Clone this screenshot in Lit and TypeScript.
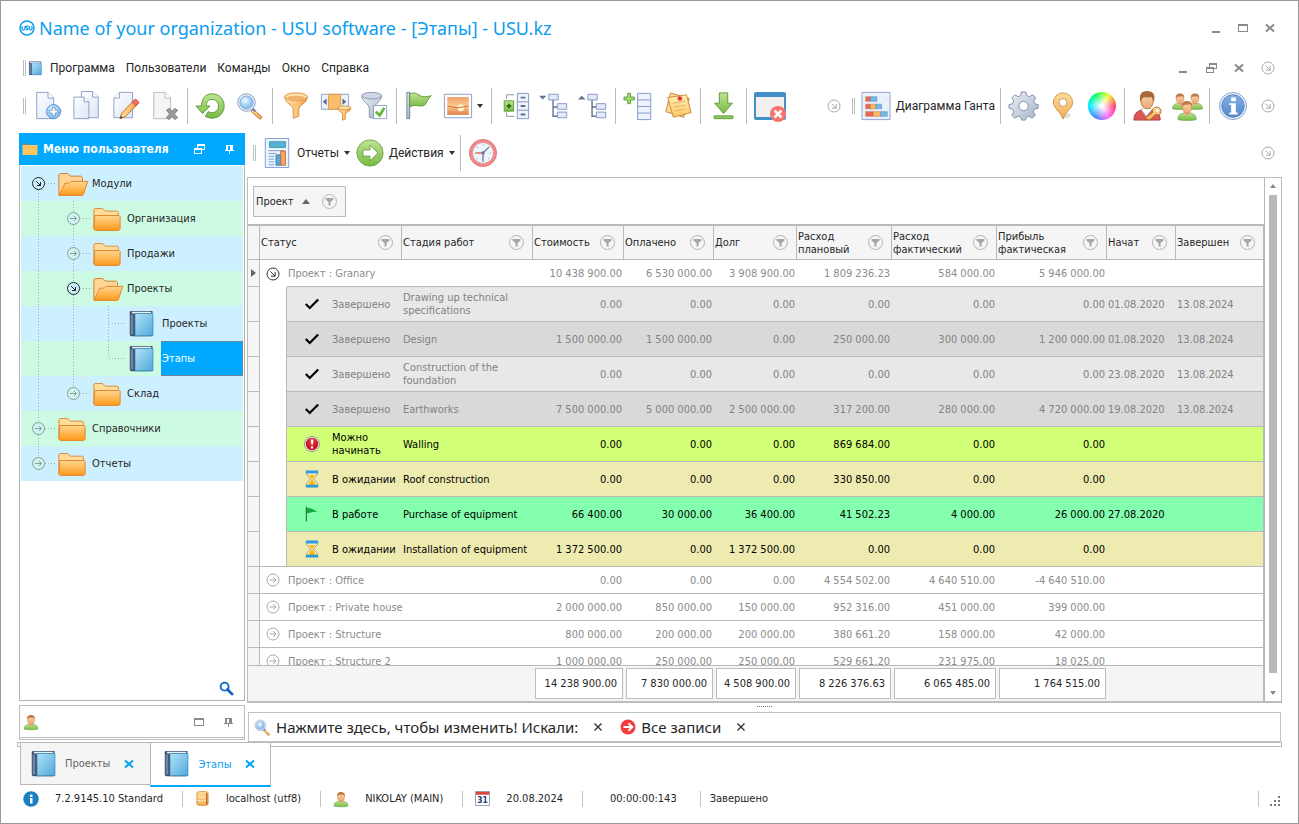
import { LitElement, html, svg, css, nothing } from "lit";
import { customElement, state } from "lit/decorators.js";
import { classMap } from "lit/directives/class-map.js";

type Art = ReturnType<typeof svg>;

const page = svg`<path d="M4 1.500h12l6 6v22H4z" fill="url(#paper)" stroke="#8c9cc4"/><path d="M16 1.500v6h6" fill="#fff" stroke="#8c9cc4"/>`;

const person = svg`<path d="M-1 29c0-6 3-8 9-10h10c6 2 9 4 9 10 0 2-28 2-28 0z" fill="url(#green)" stroke="#6aa843"/><path d="M9 17h8v3l-4 4-4-4z" fill="#eda873"/><ellipse cx="13" cy="11" rx="7" ry="8.500" fill="url(#skin)" stroke="#c98a5c"/><path d="M5.500 10C4 4 8 1 13 1s9 3 7.500 9c-1-2-1-3-3-4-3 1-7 0-9 1-2 0-2 2-3 3z" fill="#c07a45"/>`;

const art: Record<string, Art> = {
  logo: svg`<circle cx="16" cy="16" r="14" fill="none" stroke="#0a9df0" stroke-width="3"/><path d="M6 12v5c0 4 6 4 6 0v-5M19 12c-5-1-6 3-3 4s3 4-2 3M21 12v5c0 4 5 4 5 0v-5" fill="none" stroke="#0a9df0" stroke-width="2.500"/>`,
  book: svg`<path d="M2 2.500C2 1 3 1 4 1h24v27c0 1-1 2-2 2H4c-1 0-2-1-2-2z" fill="#3c4f70"/><path d="M4 2h22l1 2H5z" fill="#e9f1f8"/><path d="M8 4h20.500v25.500H8z" fill="url(#blue)" stroke="#2f86b8" stroke-width=".8"/><path d="M3 5h3v23H3z" fill="#7484a4"/>`,
  add: svg`${page}<circle cx="22" cy="22" r="7.500" fill="url(#sky)" stroke="#4f8cc6"/><path d="M20.500 17.500h3v3h3v3h-3v3h-3v-3h-3v-3h3z" fill="#fff" stroke="#4a8ac6" stroke-width=".8"/>`,
  copy: svg`<g transform="translate(6 -1)">${page}</g><path d="M2 6.500h11l5 5v18H2z" fill="url(#paper)" stroke="#8c9cc4"/><path d="M13 6.500v5h5" fill="#fff" stroke="#8c9cc4"/>`,
  edit: svg`<path d="M3 7.500l6-6h14v27H3z" fill="url(#paper)" stroke="#8c9cc4"/><path d="M9 1.500v6H3" fill="#fff" stroke="#8c9cc4"/><path d="M9.500 29.500l2-6L25 9.500l4 4L15 27.500z" fill="url(#orange)" stroke="#c06b22"/><path d="M22.500 12l3-3c1-1 5 3 4 4l-3 3z" fill="#f0705c" stroke="#c8503f"/><path d="M9.500 29.500l1-3 2 2z" fill="#444"/>`,
  remove: svg`<path d="M4 1.500h12l6 6v22H4z" fill="#f5f5f5" stroke="#b9b9b9"/><path d="M16 1.500v6h6" fill="#fff" stroke="#b9b9b9"/><path d="M17.500 20.500l3-2 3 3 3-3 3 2-3.500 4 3.500 4-3 2-3-3-3 3-3-2 3.500-4z" fill="#9a9a9a" stroke="#808080"/>`,
  refresh: svg`<path d="M6 16C6 8 10 3 17 3c8 0 13 6 13 13s-5 13-13 13c-3 0-5-1-7-2l3-5c5 3 11 0 11-6 0-4-3-7-7-7s-6 3-6 7h4L7 24 0 16z" fill="url(#green)" stroke="#5a9a32"/>`,
  search: svg`<path d="M20 20l9 8c1 2-1 4-3 2l-9-8z" fill="url(#orange)" stroke="#b8682a"/><path d="M17 17l5 5" stroke="#7f8fb3" stroke-width="3"/><circle cx="12" cy="12" r="10" fill="#eef3fb" stroke="#7f93c5"/><circle cx="12" cy="12" r="7.500" fill="url(#sky)" stroke="#7da0d8"/>`,
  funnel: svg`<path d="M4 6c0 8 9 8 9 14v9l6-2v-7c0-6 9-6 9-14z" fill="url(#orange)" stroke="#d3934a"/><ellipse cx="16" cy="6" rx="12" ry="4" fill="#ffe0a8" stroke="#d3934a"/><ellipse cx="16" cy="7" rx="9" ry="2" fill="#efb068"/>`,
  filterColumn: svg`<path d="M1.500 3.500h29v16h-29z" fill="#eef3fb" stroke="#8c9cc4"/><path d="M9 3.500h13v16H9z" fill="#fbbc6c" stroke="#e09a4a"/><path d="M7 8v7l-4-3.500zM24 8v7l4-3.500z" fill="#56688f"/><path d="M19 18c0 4 5 4 5 7v6l3-1v-5c0-3 6-3 6-7z" fill="url(#orange)" stroke="#d3934a"/><ellipse cx="26" cy="18" rx="7" ry="2" fill="#ffe0a8" stroke="#d3934a"/>`,
  filterCheck: svg`<path d="M3 5c0 7 8 8 8 14v9l5 1v-10c0-6 8-7 8-14z" fill="url(#steel)" stroke="#8793aa"/><ellipse cx="13.500" cy="5" rx="10.500" ry="3.500" fill="#d0d7e4" stroke="#8793aa"/><path d="M15.500 15.500h14v14h-14z" fill="#fff" stroke="#8c9cc4"/><path d="M18 22l4 4 5-8" fill="none" stroke="#5fb336" stroke-width="3"/>`,
  flag: svg`<path d="M2 1.500h3v28H2z" fill="url(#steel)" stroke="#68788f"/><path d="M5 3c5-2 8 0 11 2s8 1 12 0c-4 3-4 7-7 10-5 3-9-2-16 2z" fill="url(#green)" stroke="#5a9a32"/>`,
  picture: svg`<path d="M1.500 3.500h29v25h-29z" fill="#fff" stroke="#8899c8"/><path d="M4.500 6.500h23v19h-23z" fill="url(#sunset)"/><circle cx="19" cy="18" r="3.500" fill="#fff5c8"/><path d="M5 16l10 2 12-2" fill="none" stroke="#c9683a"/>`,
  groupAdd: svg`<path d="M18.500 2.500h12v27h-12zM18.500 11.500h12M18.500 20.500h12" fill="#eef3fb" stroke="#8296c8"/><path d="M22 7h5M22 16h5M22 25h5" stroke="#5d6f9a" stroke-width="2"/><path d="M7 8V4h8M7 23v4h8" fill="none" stroke="#7f8fa0"/><path d="M4.500 10.500h10v11h-10z" fill="url(#green)" stroke="#5a9a32"/><path d="M7 16h5M9.500 13.500v5" stroke="#2d6c22" stroke-width="2"/>`,
  collapse: svg`<path d="M0 5h8l-4 4z" fill="#66748c"/><path d="M15 9v18h5M15 17h5" fill="none" stroke="#62728f" stroke-width="1.500"/><path d="M10.500 3.500h10v6h-10zM19.500 13.500h10v6h-10zM19.500 22.500h10v6h-10z" fill="#e3ebf8" stroke="#8296c8"/>`,
  expand: svg`<path d="M0 9h8L4 5z" fill="#66748c"/><path d="M15 9v18h5M15 17h5" fill="none" stroke="#62728f" stroke-width="1.500"/><path d="M10.500 3.500h10v6h-10zM19.500 13.500h10v6h-10zM19.500 22.500h10v6h-10z" fill="#e3ebf8" stroke="#8296c8"/>`,
  addRows: svg`<path d="M14.500 2.500h14v28h-14zM14.500 9.500h14M14.500 16.500h14M14.500 23.500h14" fill="#eef3fb" stroke="#8296c8"/><path d="M4 2.500h3v4h4v3H7v4H4v-4H0v-3h4z" fill="#a5dc7c" stroke="#5a9a32"/>`,
  notes: svg`<path d="M8 2l20 6-6 20-19-6z" fill="#ffdd8a" stroke="#c9853e"/><path d="M5 7l20-3 5 19-19 5z" fill="url(#note)" stroke="#c9853e"/><path d="M11 13l12-2M12 17l12-2M13 21l9-1.500" stroke="#dcae68"/><circle cx="18" cy="8" r="2.500" fill="#e23c3c"/>`,
  download: svg`<path d="M11 2h9v11h5L15.500 24 6 13h5z" fill="url(#green)" stroke="#5a9a32"/><path d="M5.500 26.500h20v3h-20z" fill="#8fce5e" stroke="#5a9a32"/>`,
  closeWindow: svg`<path d="M2 2h28a2 2 0 0 1 2 2v24a2 2 0 0 1-2 2H2a2 2 0 0 1-2-2V4a2 2 0 0 1 2-2z" fill="#4290c8"/><path d="M2 7h28v20H2z" fill="#f1f1f1"/><circle cx="24" cy="24" r="8" fill="#f8736a"/><path d="M20.500 20.500l7 7m0-7l-7 7" stroke="#fff" stroke-width="2.500"/>`,
  gantt: svg`<path d="M1 1.500h30v29H1z" fill="#eaf1fb" stroke="#8fa0d0"/><g stroke="#c0603e" stroke-width=".5"><path d="M5 6h5v5H5zM5 14h5v5H5zM5 22h8v5H5z" fill="#ef6652"/><path d="M10 14h6v5h-6zM13 22h8v5h-8z" fill="#fbb95f"/><path d="M10 6h7v5h-7zM16 14h6v5h-6zM21 22h7v5h-7z" fill="#74b8ea" stroke="#4a82b6"/></g>`,
  gear: svg`<path d="M13.500 1h5l1 4 3 1.300 3.600-2.200 3.300 3.400-2.200 3.500L28.500 14l3.500 1v4l-4 1-1.300 3 2.200 3.600-3.400 3.300-3.500-2.200-3 1.300-1 3h-4l-1-3-3-1.300-3.600 2.200-3.300-3.300 2.200-3.600-1.300-3L0 19v-4l4-1 1.300-3L3.100 7.500l3.400-3.400L10 6.300 13 5z" transform="scale(.97)" fill="url(#steel)" stroke="#7c8ca6"/><circle cx="15.500" cy="16" r="5" fill="#fff" stroke="#7c8ca6"/>`,
  pin: svg`<ellipse cx="19" cy="27" rx="6" ry="3" fill="#00000022"/><path d="M16 31C14 23 5 19 5 12a11 11 0 0 1 22 0c0 7-9 11-11 19z" fill="url(#gold)" stroke="#c98a3e"/><circle cx="16" cy="12" r="4.500" fill="#fff" stroke="#b9965e"/>`,
  man: svg`<path d="M1 31c0-7 3-9 8-11h12c5 2 8 5 8 11z" fill="#dc5654" stroke="#a84340"/><path d="M9 20l5 7 6-7-2-2h-7z" fill="#fff" stroke="#b9b9c8"/><ellipse cx="15" cy="11" rx="6.500" ry="8" fill="url(#skin)" stroke="#b87a4c"/><path d="M8 12C6 4 9 0 15 0s10 4 7 12c-1-3-1-5-3-6-3 2-6 0-8 1-2 1-2 3-3 5z" fill="#a9683a"/><path d="M21 23c-2-5 5-8 8-4s-1 8-5 6l-6 6-4-1v-2z" fill="url(#gold)" stroke="#a66c27"/><circle cx="26" cy="21" r="1.500" fill="#fff"/>`,
  users: svg`<g transform="translate(1 2) scale(.58)">${person}</g><g transform="translate(17 2) scale(.58)">${person}</g><g transform="translate(7 10) scale(.7)">${person}</g>`,
  user: svg`<g transform="translate(3 1)">${person}</g>`,
  info: svg`<circle cx="16" cy="16" r="14.500" fill="#e6eef9" stroke="#8aa5cd"/><circle cx="16" cy="16" r="12" fill="url(#infoBlue)" stroke="#5b84bd"/><path d="M14 7h5v4h-5zM12 13h7v10h2v2h-9v-2h2v-8h-2z" fill="#fff"/>`,
  infoFlat: svg`<circle cx="16" cy="16" r="15.500" fill="#1a7fc0"/><path d="M14 7h5v5h-5zM14 14h5v11h-5z" fill="#fff"/>`,
  report: svg`<path d="M3.500.5h25v31h-25z" fill="#eaf4fd" stroke="#7f9ad8"/><path d="M8 4h17v6H8z" fill="#55b4d6" stroke="#3c91b3"/><path d="M7 13.500h17M7 16.500h8M7 19.500h6M7 22.500h6M7 25.500h6M7 28.500h6" stroke="#8296c8"/><path d="M15 18h5v11h-5z" fill="#55a9d8" stroke="#367fb0"/><path d="M20 14h5v15h-5z" fill="#f8a66a" stroke="#c86c38"/>`,
  go: svg`<circle cx="16" cy="16" r="15" fill="url(#green)" stroke="#6aa243"/><path d="M8 12.500h8V7l9 9-9 9v-5.500H8z" fill="#fff" stroke="#6a9d4a"/>`,
  clock: svg`<circle cx="16" cy="16" r="14" fill="#eef5fc" stroke="#f08a8a" stroke-width="3.500"/><circle cx="16" cy="16" r="15.500" fill="none" stroke="#d96a6c" stroke-width=".7"/><circle cx="16" cy="16" r="12" fill="none" stroke="#d96a6c" stroke-width=".7"/><path d="M16 16v10M16 16l7-7" stroke="#667a9a" stroke-width="1.500"/><path d="M16 16H7" stroke="#e05a55" stroke-width="1.500"/><path d="M16 6v1M25 16h-1M9 9l1 1M9 23l1-1M23 23l-1-1" stroke="#7788a0"/><circle cx="16" cy="16" r="2" fill="#67788f"/>`,
  folder: svg`<path d="M1 27V5l1-1h9l3 3h14l1 1v19z" fill="#ffdc9a" stroke="#d8842f"/><path d="M2 12h28l1 1v14c0 1-1 2-2 2H3c-1 0-2-1-2-2z" fill="url(#folder)" stroke="#e07d1e"/>`,
  folderOpen: svg`<path d="M1 28V5l2-1h8l3 3h12c1 0 2 1 2 2v6L6 28z" fill="#ffd494" stroke="#c9761f"/><path d="M8 15h5l2-2h19l-5 15c0 1-1 1-2 1H1z" fill="url(#folder)" stroke="#e07d1e"/>`,
  folderFlat: svg`<path d="M1 5h11l3 3H1z" fill="#8b8378"/><path d="M1 8h30v20H1z" fill="#fdc661"/>`,
  lens: svg`<circle cx="12" cy="12" r="8.500" fill="none" stroke="#0b63c6" stroke-width="4"/><path d="M18 18l10 10" stroke="#0b63c6" stroke-width="6" stroke-linecap="round"/>`,
  check: svg`<path d="M5 16l7 7L27 8" fill="none" stroke="#000" stroke-width="4"/>`,
  alert: svg`<circle cx="16" cy="16" r="13.500" fill="#e8e8e8" stroke="#8f8f8f" stroke-width="1.500"/><circle cx="16" cy="16" r="11" fill="url(#red)"/><path d="M14 8h4.500l-1 9h-2.500zM14 20h4v4h-4z" fill="#fff"/>`,
  hourglass: svg`<path d="M6 4h20c0 7-6 8-7 12 1 4 7 5 7 12H6c0-7 6-8 7-12-1-4-7-5-7-12z" fill="#f6f3c8" stroke="#a58f52" stroke-width="1.500"/><path d="M10 9h12l-6 7zM16 15l7 12H9z" fill="#f9b514"/><path d="M5 1h22v5H5zM5 26h22v5H5z" fill="#2b9ade"/>`,
  workFlag: svg`<path d="M5 3h2v26H5z" fill="#2b6f3c"/><path d="M7 5c7 0 13 4 19 7-7 0-12 1-19 3z" fill="#13a83e"/>`,
  goRed: svg`<circle cx="16" cy="16" r="15" fill="#f53b3b"/><path d="M7 16h17M17 8.500l7.500 7.500-7.500 7.500" fill="none" stroke="#fff" stroke-width="4"/>`,
  database: svg`<path d="M4 4c0-4 24-4 24 0v24c0 4-24 4-24 0z" fill="url(#gold)" stroke="#c5802e" stroke-width="1.500"/><path d="M5 11c0 3 22 3 22 0M5 19c0 3 22 3 22 0" fill="none" stroke="#fff2d8" stroke-width="2"/><path d="M25 4v25" stroke="#b9651d" stroke-width="3"/>`,
};

const icon = (name: string, size: number) =>
  html`<svg class="icon" viewBox="0 0 32 32" width=${size} height=${size} aria-hidden="true">${art[name]}</svg>`;

const glyphs: Record<string, Art> = {
  min: svg`<path d="M4 11h8v2H4z"/>`,
  max: svg`<path fill-rule="evenodd" d="M3 4h10v8H3zM4 6v5h8V6z"/>`,
  restore: svg`<path fill-rule="evenodd" d="M6 3h8v6h-3v4H3V7h3zm1 2v2h4v1h2V5zM4 9v3h6V9z"/>`,
  close: svg`<path d="M4 4.500l8 7M12 4.500l-8 7" fill="none" stroke="currentColor" stroke-width="2"/>`,
  cross: svg`<path d="M4.500 4.500l7 7M11.500 4.500l-7 7" fill="none" stroke="currentColor" stroke-width="1.400"/>`,
  pin: svg`<path fill-rule="evenodd" d="M5 4h7v5h1v1H9v3H8v-3H4V9h1zm2 1v4h2V5z"/>`,
};
const glyph = (name: string) =>
  html`<svg class="glyph" viewBox="0 0 16 16" width="16" height="16" aria-hidden="true">${glyphs[name]}</svg>`;

const arrowSouthEast = html`<svg class="ring" viewBox="0 0 14 14" width="14" height="14" aria-hidden="true"><circle cx="7" cy="7" r="6"/><path d="M4.500 4.500L9 9M9.200 5v4.200H5"/></svg>`;
const arrowEast = html`<svg class="ring" viewBox="0 0 14 14" width="14" height="14" aria-hidden="true"><circle cx="7" cy="7" r="6"/><path d="M3.500 7h6.500M7.300 4.200L10 7 7.300 9.800"/></svg>`;
const caret = html`<svg class="caret" viewBox="0 0 6 4" width="6" height="4" aria-hidden="true"><path d="M0 0h6L3 4z"/></svg>`;

interface Column { title: string; wide: boolean }
const columns: Column[] = [
  { title: "Статус", wide: true },
  { title: "Стадия работ", wide: false },
  { title: "Стоимость", wide: false },
  { title: "Оплачено", wide: false },
  { title: "Долг", wide: false },
  { title: "Расход плановый", wide: false },
  { title: "Расход фактический", wide: false },
  { title: "Прибыль фактическая", wide: false },
  { title: "Начат", wide: false },
  { title: "Завершен", wide: false },
];

interface Stage { kind: string; mark: string; status: string; name: string; sums: string[]; start: string; end: string }
const stages: Stage[] = [
  { kind: "done", mark: "check", status: "Завершено", name: "Drawing up technical specifications", sums: ["0.00", "0.00", "0.00", "0.00", "0.00", "0.00"], start: "01.08.2020", end: "13.08.2024" },
  { kind: "done alt", mark: "check", status: "Завершено", name: "Design", sums: ["1 500 000.00", "1 500 000.00", "0.00", "250 000.00", "300 000.00", "1 200 000.00"], start: "01.08.2020", end: "13.08.2024" },
  { kind: "done", mark: "check", status: "Завершено", name: "Construction of the foundation", sums: ["0.00", "0.00", "0.00", "0.00", "0.00", "0.00"], start: "23.08.2020", end: "13.08.2024" },
  { kind: "done alt", mark: "check", status: "Завершено", name: "Earthworks", sums: ["7 500 000.00", "5 000 000.00", "2 500 000.00", "317 200.00", "280 000.00", "4 720 000.00"], start: "19.08.2020", end: "13.08.2024" },
  { kind: "ready", mark: "alert", status: "Можно начинать", name: "Walling", sums: ["0.00", "0.00", "0.00", "869 684.00", "0.00", "0.00"], start: "", end: "" },
  { kind: "wait", mark: "hourglass", status: "В ожидании", name: "Roof construction", sums: ["0.00", "0.00", "0.00", "330 850.00", "0.00", "0.00"], start: "", end: "" },
  { kind: "work", mark: "workFlag", status: "В работе", name: "Purchase of equipment", sums: ["66 400.00", "30 000.00", "36 400.00", "41 502.23", "4 000.00", "26 000.00"], start: "27.08.2020", end: "" },
  { kind: "wait", mark: "hourglass", status: "В ожидании", name: "Installation of equipment", sums: ["1 372 500.00", "0.00", "1 372 500.00", "0.00", "0.00", "0.00"], start: "", end: "" },
];

interface Project { name: string; sums: string[]; stages: Stage[] }
const projects: Project[] = [
  { name: "Granary", sums: ["10 438 900.00", "6 530 000.00", "3 908 900.00", "1 809 236.23", "584 000.00", "5 946 000.00"], stages },
  { name: "Office", sums: ["0.00", "0.00", "0.00", "4 554 502.00", "4 640 510.00", "-4 640 510.00"], stages: [] },
  { name: "Private house", sums: ["2 000 000.00", "850 000.00", "150 000.00", "952 316.00", "451 000.00", "399 000.00"], stages: [] },
  { name: "Structure", sums: ["800 000.00", "200 000.00", "200 000.00", "380 661.20", "158 000.00", "42 000.00"], stages: [] },
  { name: "Structure 2", sums: ["1 000 000.00", "250 000.00", "250 000.00", "529 661.20", "231 975.00", "18 025.00"], stages: [] },
];
const totals = ["14 238 900.00", "7 830 000.00", "4 508 900.00", "8 226 376.63", "6 065 485.00", "1 764 515.00"];

// Guide letters: F full line, B line below, T line above, R branch to the right, O open node, C closed node.
interface TreeNode { guides: string[]; icon: string; label: string }
const tree: TreeNode[] = [
  { guides: ["BRO"], icon: "folderOpen", label: "Модули" },
  { guides: ["F", "FRC"], icon: "folder", label: "Организация" },
  { guides: ["F", "FRC"], icon: "folder", label: "Продажи" },
  { guides: ["F", "FRO"], icon: "folderOpen", label: "Проекты" },
  { guides: ["F", "F", "FR"], icon: "book", label: "Проекты" },
  { guides: ["F", "F", "TR"], icon: "book", label: "Этапы" },
  { guides: ["F", "TRC"], icon: "folder", label: "Склад" },
  { guides: ["FRC"], icon: "folder", label: "Справочники" },
  { guides: ["TRC"], icon: "folder", label: "Отчеты" },
];

@customElement("app-root")
export class AppRoot extends LitElement {
  @state() private selected = 5;

  static styles = css`
    :host {
      display: flex;
      flex-direction: column;
      box-sizing: border-box;
      height: 100vh;
      min-height: 600px;
      overflow: hidden;
      padding: 0 16px 13px 18px;
      border: 1px solid #999;
      background: #fff;
      color: #262626;
      font: 11px/13px "DejaVu Sans Condensed", "Noto Sans", sans-serif;
    }
    * { box-sizing: border-box; }
    button { font: inherit; color: inherit; background: none; border: 0; padding: 0; margin: 0; text-align: left; }
    a { color: inherit; text-decoration: none; }
    svg { display: block; flex: none; }
    .defs { width: 0; height: 0; position: absolute; }
    .icon { overflow: visible; }
    .glyph { fill: currentColor; color: #8a8a8a; }
    .ring { fill: none; stroke: #a9a9a9; stroke-width: 1; overflow: visible; }
    .caret { fill: #333; }

    .titlebar { display: flex; align-items: center; flex: none; height: 54px; }
    .titlebar h1 { margin: 0 auto 0 4px; font: 400 18px/24px "Noto Sans", "Open Sans", sans-serif; color: #0a9df0; white-space: nowrap; }
    .window-buttons { display: flex; gap: 11px; padding-right: 4px; }

    .menubar { display: flex; align-items: center; flex: none; height: 26px; font: 12px/16px Roboto, "Noto Sans", sans-serif; }
    .menubar nav { display: flex; gap: 11px; margin: 0 auto 0 7px; }
    .grip { flex: none; width: 3px; height: 16px; margin: 0 2px 0 4px; border: solid #bdbdbd; border-width: 0 1px; }
    .child-buttons { display: flex; gap: 12px; margin-right: 14px; }
    .more { flex: none; margin-right: 7px; }

    .toolbars { display: flex; align-items: center; flex: none; height: 52px; padding-bottom: 2px; }
    .toolbar { display: flex; align-items: center; }
    .toolbar.fill { flex: 1; }
    .toolbar.fill .more { margin-left: auto; }
    .toolbar.service .more { margin-left: 9px; }
    .tool { display: flex; align-items: center; justify-content: center; width: 39px; height: 36px; }
    .tool.drop { width: 49px; justify-content: flex-start; gap: 4px; padding-left: 4px; }
    .tool.text { width: auto; gap: 5px; padding: 0 2px 0 4px; font: 12px/16px Roboto, "Noto Sans", sans-serif; }
    .sep { flex: none; width: 1px; height: 36px; margin: 0 3px; background: #bcbcbc; }
    .wheel { width: 28px; height: 28px; border-radius: 50%; background: radial-gradient(circle, #fff 5%, #fff0 65%), conic-gradient(from 90deg, #ff3c6c, #f6f, #48f, #0ef, #0f6, #ef3, #ff3c6c); }

    .main { display: flex; flex: 1; min-height: 0; gap: 2px; }
    .sidebar { display: flex; flex-direction: column; flex: none; width: 226px; }
    .side-head { display: flex; align-items: center; flex: none; height: 32px; padding: 0 8px 0 3px; background: #00a8ff; color: #fff; }
    .side-head h2 { margin: 0 auto 0 5px; font: bold 12px/16px "DejaVu Sans Condensed", "Noto Sans", sans-serif; }
    .side-head .glyph { color: #fff; }
    .side-head button + button { margin-left: 14px; }
    .side-body { display: flex; flex-direction: column; flex: 1; padding: 0 1px; border: 1px solid #b4b4b4; border-top-color: #fff; }
    .tree { list-style: none; margin: 0; padding: 0; }
    .tree li { display: flex; height: 35px; background: #cdf0fe; }
    .tree li:nth-child(even) { background: #cdfae3; }
    .tree .node { display: flex; align-items: center; flex: none; width: 35px; padding-left: 2px; }
    .tree a { display: flex; align-items: center; flex: 1; padding: 0 1px; border: 1px dotted transparent; border-width: 1px 1px 1px 0; }
    .tree a.selected { background: #00a8ff; color: #fff; border-color: #d06a30; }
    .guide { stroke: #a9a9a9; fill: none; }
    .guide .dots { stroke-dasharray: 1 2; }
    .guide .open { stroke: #222; fill: #cdf0fe; }
    .guide .closed { stroke: #8e9a9a; fill: #cdf5f0; }
    .guide path.open, .guide path.closed { fill: none; }
    .side-search { margin: auto 9px 4px auto; }
    .side-foot { display: flex; align-items: center; flex: none; height: 33px; margin-top: 4px; padding: 0 8px 0 3px; border: 1px solid #bdbdbd; }
    .side-foot .icon { margin-right: auto; }
    .side-foot button + button { margin-left: 13px; }
    .side-line { flex: none; height: 2px; margin-bottom: 2px; border: solid #bdbdbd; border-width: 0 1px 1px; }

    .content { display: flex; flex-direction: column; flex: 1; min-width: 0; }
    .local { display: flex; align-items: center; flex: none; height: 39px; margin-bottom: 5px; padding-left: 2px; }
    .local .more { margin-left: auto; }
    .frame { display: flex; flex: 1; min-height: 0; border: 1px solid #bdbdbd; border-bottom-width: 2px; }
    .grid { display: flex; flex-direction: column; flex: 1; min-width: 0; }
    .group-panel { display: flex; flex: none; height: 46px; padding: 8px 5px; }
    .group-field { display: flex; align-items: center; width: 93px; height: 31px; padding: 0 8px 0 2px; border: 1px solid #b9b9b9; background: #f5f5f5; }
    .group-field svg:last-child { margin-left: auto; }
    .group-field .sort { margin-left: 8px; fill: #666; }
    .scroller { flex: 1; min-height: 0; overflow: hidden; border-top: 2px solid #b9b9b9; }
    table { width: 100%; table-layout: fixed; border-collapse: separate; border-spacing: 0; }
    .c-mark { width: 12px; }
    .c-indent { width: 27px; }
    .c-status { width: 115px; }
    .c-stage { width: 131px; }
    .c-cost { width: 91px; }
    .c-paid { width: 90px; }
    .c-debt { width: 83px; }
    .c-plan { width: 95px; }
    .c-fact { width: 105px; }
    .c-profit { width: 110px; }
    .c-start { width: 69px; }
    th, td { padding: 0 2px 0 1px; border: 0 solid #b9b9b9; border-bottom-width: 1px; text-align: left; font-weight: 400; vertical-align: middle; }
    th { height: 34px; border-right-width: 1px; background: #f5f5f5; color: #262626; }
    th div { display: flex; align-items: center; justify-content: space-between; padding: 0 6px 0 0; }
    .num { text-align: right; white-space: nowrap; }
    td:last-child { border-right-width: 1px; }
    td.indicator { padding: 0 3px; border-right-width: 1px; background: #f5f5f5; }
    .group td { height: 27px; color: #8b8b8b; }
    .group .node { padding: 0; }
    .group .node svg { margin: 0 6px; }
    .group.open .node { border-bottom-width: 0; }
    .group.open .ring { stroke: #333; }
    .stage td { height: 35px; color: #000; }
    .stage td.indent { border-right-width: 1px; border-bottom-width: 0; }
    .stage.last td.indent { border-bottom-width: 1px; }
    .stage .state { display: flex; align-items: center; gap: 11px; padding-left: 15px; }
    .stage.done td { color: #828282; }
    .done td:not(.indicator) { background-color: #e8e8e8; }
    .done.alt td:not(.indicator) { background-color: #d9d9d9; }
    .ready td:not(.indicator) { background-color: #d2ff78; }
    .wait td:not(.indicator) { background-color: #eeebb1; }
    .work td:not(.indicator) { background-color: #84ffae; }
    .stage td.indent:not(.indicator) { background: #fff; }
    .totals { flex: none; border-top: 1px solid #b9b9b9; background: #f5f5f5; height: 36px; }
    .totals td { height: 35px; padding: 0 1px 0 2px; border-width: 0; }
    .totals td:last-child { border-right-width: 1px; }
    .totals output { display: block; height: 31px; padding: 0 5px; border: 1px solid #bdbdbd; background: #fff; line-height: 29px; }
    .scrollbar { display: flex; flex-direction: column; align-items: center; flex: none; width: 17px; padding: 6px 0; border-left: 1px solid #b9b9b9; }
    .scrollbar .thumb { flex: 1; width: 8px; margin: 7px 0 18px; background: #b9b9b9; }
    .scrollbar svg { fill: #888; }

    .splitter { display: flex; justify-content: center; flex: none; height: 9px; padding-top: 3px; }
    .splitter span { width: 15px; height: 1px; background: repeating-linear-gradient(90deg, #777 0 1px, #fff 1px 2px); }
    .search-bar { display: flex; align-items: center; flex: none; height: 30px; margin: 0 1px; padding: 0 5px; border: 1px solid #c2c2c2; font: 15px/22px "Noto Sans", sans-serif; white-space: nowrap; }
    .search-bar .label { margin-left: 5px; }
    .search-bar .clear { margin: 0 14px 0 12px; }
    .search-bar .glyph { color: #333; }

    .tabs { display: flex; align-items: flex-start; flex: none; height: 45px; margin-left: -2px; border-top: 1px solid #b9b9b9; }
    .tabs::before { content: ""; width: 2px; height: 3px; border: solid #b9b9b9; border-width: 0 0 1px 1px; }
    .tabs::after { content: ""; flex: 1; height: 3px; border: solid #b9b9b9; border-width: 0 1px 1px 0; }
    .tab { display: flex; align-items: center; height: 42px; padding: 0 13px 0 9px; border: solid #b9b9b9; border-width: 0 0 1px 1px; background: #f5f5f5; color: #666; }
    .tab .name { margin: 0 11px 0 7px; }
    .tab .glyph { color: #00a2ec; }
    .tab.current { height: 44px; padding: 0 12px; border-width: 0 1px 2px; border-bottom-color: #00a8ff; background: #fff; color: #0a9df0; }

    .status { display: flex; align-items: center; flex: none; height: 23px; }
    .status .cell { display: flex; align-items: center; gap: 16px; height: 16px; padding: 0 19px 0 12px; border-right: 1px solid #c4c4c4; }
    .status .cell:first-child { padding-left: 4px; }
    .status .cell.time { padding: 0 23px 0 27px; }
    .status .cell.state-text { flex: 1; padding-left: 9px; }
    .resize { margin: 4px 1px 0 10px; fill: #777; }
  `;

  private tool(name: string, label: string, size = 30) {
    return html`<button class="tool" aria-label=${label}>${icon(name, size)}</button>`;
  }

  private filterMark() {
    return html`<svg viewBox="0 0 15 15" width="15" height="15" aria-hidden="true"><circle cx="7.500" cy="7.500" r="7" fill="none" stroke="#b4b4b4"/><path d="M3.500 4h8v1.500L8.500 8v3.500h-2V8l-3-2.500z" fill="#a6a6a6"/></svg>`;
  }

  private cols() {
    return html`<colgroup>${["mark", "indent", "status", "stage", "cost", "paid", "debt", "plan", "fact", "profit", "start", "end"].map(
      (c) => html`<col class="c-${c}">`
    )}</colgroup>`;
  }

  private guide(kind: string) {
    const has = (c: string) => kind.includes(c);
    const node = has("O") || has("C");
    return html`<svg class="guide" viewBox="0 0 35 35" width="35" height="35" aria-hidden="true">
      ${has("F") || has("T") ? svg`<path class="dots" d="M17.500 0v17"/>` : nothing}
      ${has("F") || has("B") ? svg`<path class="dots" d="M17.500 18v17"/>` : nothing}
      ${has("R") ? svg`<path class="dots" d="M18 17.500h17"/>` : nothing}
      ${node ? svg`<circle class=${has("O") ? "open" : "closed"} cx="17.500" cy="17.500" r="6"/>` : nothing}
      ${has("O") ? svg`<path class="open" d="M15 15l4.500 4.500V16v3.500H16"/>` : nothing}
      ${has("C") ? svg`<path class="closed" d="M14 17.500h6.500M18 15l2.500 2.500L18 20"/>` : nothing}
    </svg>`;
  }

  private projectRows(p: Project, index: number) {
    const open = p.stages.length > 0;
    return html`
      <tr class=${classMap({ group: true, open })}>
        <td class="indicator">${index === 0 ? html`<svg viewBox="0 0 5 8" width="5" height="8" aria-hidden="true"><path d="M0 0l5 4-5 4z" fill="#666"/></svg>` : nothing}</td>
        <td class="node">${open ? arrowSouthEast : arrowEast}</td>
        <td colspan="2">Проект : ${p.name}</td>
        ${p.sums.map((s) => html`<td class="num">${s}</td>`)}
        <td></td><td></td>
      </tr>
      ${p.stages.map((s, i) => html`
        <tr class="stage ${s.kind} ${i === p.stages.length - 1 ? "last" : ""}">
          <td class="indicator"></td>
          <td class="indent"></td>
          <td><div class="state">${icon(s.mark, 18)}<span>${s.status}</span></div></td>
          <td>${s.name}</td>
          ${s.sums.map((n) => html`<td class="num">${n}</td>`)}
          <td>${s.start}</td>
          <td>${s.end}</td>
        </tr>`)}`;
  }

  render() {
    return html`
      <svg class="defs" aria-hidden="true">
        <defs>
          <linearGradient id="paper" x2="1" y2="1"><stop stop-color="#fff"/><stop offset="1" stop-color="#dbe6f6"/></linearGradient>
          <linearGradient id="green" x2="0" y2="1"><stop stop-color="#bfe394"/><stop offset="1" stop-color="#78bb44"/></linearGradient>
          <linearGradient id="orange" x2="1" y2="0"><stop stop-color="#ffdba0"/><stop offset=".5" stop-color="#ffc678"/><stop offset="1" stop-color="#ee9a4a"/></linearGradient>
          <linearGradient id="gold" x2="0" y2="1"><stop stop-color="#ffdc98"/><stop offset="1" stop-color="#f5ad55"/></linearGradient>
          <linearGradient id="folder" x2="0" y2="1"><stop stop-color="#ffd690"/><stop offset="1" stop-color="#ff9a1c"/></linearGradient>
          <linearGradient id="blue" x2="1" y2="1"><stop stop-color="#b4e2f7"/><stop offset="1" stop-color="#4fa9da"/></linearGradient>
          <linearGradient id="steel" x2="1" y2="1"><stop stop-color="#eef2f8"/><stop offset="1" stop-color="#a6b2c6"/></linearGradient>
          <linearGradient id="sunset" x2="0" y2="1"><stop stop-color="#f0a06a"/><stop offset=".5" stop-color="#fbc98c"/><stop offset="1" stop-color="#e0804a"/></linearGradient>
          <linearGradient id="note" x2="0" y2="1"><stop stop-color="#fff0b4"/><stop offset="1" stop-color="#fbc765"/></linearGradient>
          <linearGradient id="skin" x2="0" y2="1"><stop stop-color="#fbd3ac"/><stop offset="1" stop-color="#eda873"/></linearGradient>
          <linearGradient id="infoBlue" x2="0" y2="1"><stop stop-color="#84b0e8"/><stop offset="1" stop-color="#5288cc"/></linearGradient>
          <radialGradient id="sky" cx=".4" cy=".35"><stop stop-color="#f2faff"/><stop offset="1" stop-color="#8fc4f0"/></radialGradient>
          <radialGradient id="red" cx=".5" cy=".3"><stop stop-color="#f24a4a"/><stop offset="1" stop-color="#c80f1c"/></radialGradient>
        </defs>
      </svg>

      <header class="titlebar">
        ${icon("logo", 16)}
        <h1>Name of your organization - USU software - [Этапы] - USU.kz</h1>
        <div class="window-buttons">
          <button aria-label="Свернуть">${glyph("min")}</button>
          <button aria-label="Развернуть">${glyph("max")}</button>
          <button aria-label="Закрыть">${glyph("close")}</button>
        </div>
      </header>

      <div class="menubar">
        <span class="grip"></span>
        ${icon("book", 15)}
        <nav>
          ${["Программа", "Пользователи", "Команды", "Окно", "Справка"].map((m) => html`<button>${m}</button>`)}
        </nav>
        <div class="child-buttons">
          <button aria-label="Свернуть окно">${glyph("min")}</button>
          <button aria-label="Восстановить окно">${glyph("restore")}</button>
          <button aria-label="Закрыть окно">${glyph("close")}</button>
        </div>
        <button class="more" aria-label="Настроить меню">${arrowSouthEast}</button>
      </div>

      <div class="toolbars">
        <div class="toolbar fill">
          <span class="grip"></span>
          ${this.tool("add", "Добавить")}${this.tool("copy", "Копировать")}${this.tool("edit", "Редактировать")}${this.tool("remove", "Удалить")}
          <span class="sep"></span>
          ${this.tool("refresh", "Обновить")}${this.tool("search", "Поиск", 28)}
          <span class="sep"></span>
          ${this.tool("funnel", "Фильтр")}${this.tool("filterColumn", "Фильтр по столбцу")}${this.tool("filterCheck", "Фильтр по значению")}
          <span class="sep"></span>
          ${this.tool("flag", "Статус")}
          <button class="tool drop" aria-label="Изображение">${icon("picture", 30)}${caret}</button>
          <span class="sep"></span>
          ${this.tool("groupAdd", "Группировка")}${this.tool("collapse", "Развернуть группы")}${this.tool("expand", "Свернуть группы")}
          <span class="sep"></span>
          ${this.tool("addRows", "Добавить строки")}${this.tool("notes", "Заметки")}
          <span class="sep"></span>
          ${this.tool("download", "Экспорт")}
          <span class="sep"></span>
          ${this.tool("closeWindow", "Закрыть окно", 32)}
          <button class="more" aria-label="Настроить панель">${arrowSouthEast}</button>
        </div>
        <div class="toolbar service">
          <span class="grip"></span>
          <button class="tool text">${icon("gantt", 30)}<span>Диаграмма Ганта</span></button>
          <span class="sep"></span>
          ${this.tool("gear", "Настройки")}${this.tool("pin", "Карта", 28)}
          <button class="tool" aria-label="Цвета"><span class="wheel"></span></button>
          <span class="sep"></span>
          ${this.tool("man", "Права доступа")}${this.tool("users", "Пользователи")}
          <span class="sep"></span>
          ${this.tool("info", "О программе", 30)}
          <button class="more" aria-label="Настроить панель сервиса">${arrowSouthEast}</button>
        </div>
      </div>

      <div class="main">
        <aside class="sidebar">
          <div class="side-head">
            ${icon("folderFlat", 16)}
            <h2>Меню пользователя</h2>
            <button aria-label="Открепить">${glyph("restore")}</button>
            <button aria-label="Закрепить">${glyph("pin")}</button>
          </div>
          <div class="side-body">
            <ul class="tree">
              ${tree.map((n, i) => html`<li>
                ${n.guides.map((g) => this.guide(g))}
                <span class="node">${icon(n.icon, 28)}</span>
                <a href="#" class=${classMap({ selected: i === this.selected })} @click=${(e: Event) => { e.preventDefault(); this.selected = i; }}>${n.label}</a>
              </li>`)}
            </ul>
            <button class="side-search" aria-label="Найти в меню">${icon("lens", 15)}</button>
          </div>
          <div class="side-foot">
            ${icon("user", 16)}
            <button aria-label="Развернуть панель">${glyph("max")}</button>
            <button aria-label="Закрепить панель">${glyph("pin")}</button>
          </div>
          <div class="side-line"></div>
        </aside>

        <section class="content">
          <div class="local">
            <span class="grip"></span>
            <button class="tool text">${icon("report", 30)}<span>Отчеты</span>${caret}</button>
            <button class="tool text">${icon("go", 28)}<span>Действия</span>${caret}</button>
            <span class="sep"></span>
            ${this.tool("clock", "История", 28)}
            <button class="more" aria-label="Настроить панель окна">${arrowSouthEast}</button>
          </div>

          <div class="frame">
            <div class="grid">
              <div class="group-panel">
                <button class="group-field">Проект
                  <svg class="sort" viewBox="0 0 8 5" width="8" height="5" aria-hidden="true"><path d="M0 5l4-5 4 5z"/></svg>
                  ${this.filterMark()}
                </button>
              </div>
              <div class="scroller">
                <table>
                  ${this.cols()}
                  <thead>
                    <tr><th></th>
                      ${columns.map((c) => html`<th colspan=${c.wide ? 2 : 1}><div><span>${c.title}</span>${this.filterMark()}</div></th>`)}
                    </tr>
                  </thead>
                  <tbody>${projects.map((p, i) => this.projectRows(p, i))}</tbody>
                </table>
              </div>
              <table class="totals">
                ${this.cols()}
                <tbody><tr>
                  <td colspan="4"></td>
                  ${totals.map((t) => html`<td class="num"><output>${t}</output></td>`)}
                  <td colspan="2"></td>
                </tr></tbody>
              </table>
            </div>
            <div class="scrollbar" aria-hidden="true">
              <svg viewBox="0 0 6 4" width="6" height="4"><path d="M0 4l3-4 3 4z"/></svg>
              <span class="thumb"></span>
              <svg viewBox="0 0 6 4" width="6" height="4"><path d="M0 0h6L3 4z"/></svg>
            </div>
          </div>
          <div class="splitter"><span></span></div>
          <div class="search-bar">
            ${icon("search", 17)}<span class="label">Нажмите здесь, чтобы изменить! Искали:</span>
            <button class="clear" aria-label="Очистить поиск">${glyph("cross")}</button>
            ${icon("goRed", 16)}<span class="label">Все записи</span>
            <button class="clear" aria-label="Сбросить записи">${glyph("cross")}</button>
          </div>
        </section>
      </div>

      <div class="tabs">
        <div class="tab">${icon("book", 28)}<span class="name">Проекты</span><button aria-label="Закрыть Проекты">${glyph("close")}</button></div>
        <div class="tab current">${icon("book", 28)}<span class="name">Этапы</span><button aria-label="Закрыть Этапы">${glyph("close")}</button></div>
      </div>

      <footer class="status">
        <div class="cell">${icon("infoFlat", 16)}<span>7.2.9145.10 Standard</span></div>
        <div class="cell">${icon("database", 15)}<span>localhost (utf8)</span></div>
        <div class="cell">${icon("user", 16)}<span>NIKOLAY (MAIN)</span></div>
        <div class="cell">
          <svg viewBox="0 0 16 16" width="15" height="15" aria-hidden="true"><path d="M.5.500h15v15H.5z" fill="#fff" stroke="#9099b4"/><path d="M1 1h14v3H1z" fill="#d8473f"/><text x="8" y="13" text-anchor="middle" font-size="9" font-weight="bold" fill="#2a3a66">31</text></svg>
          <span>20.08.2024</span>
        </div>
        <div class="cell time">00:00:00:143</div>
        <div class="cell state-text">Завершено</div>
        <svg class="resize" viewBox="0 0 12 12" width="12" height="12" aria-hidden="true"><path d="M9 1h2v2H9zM5 5h2v2H5zM9 5h2v2H9zM1 9h2v2H1zM5 9h2v2H5zM9 9h2v2H9z"/></svg>
      </footer>
    `;
  }
}
